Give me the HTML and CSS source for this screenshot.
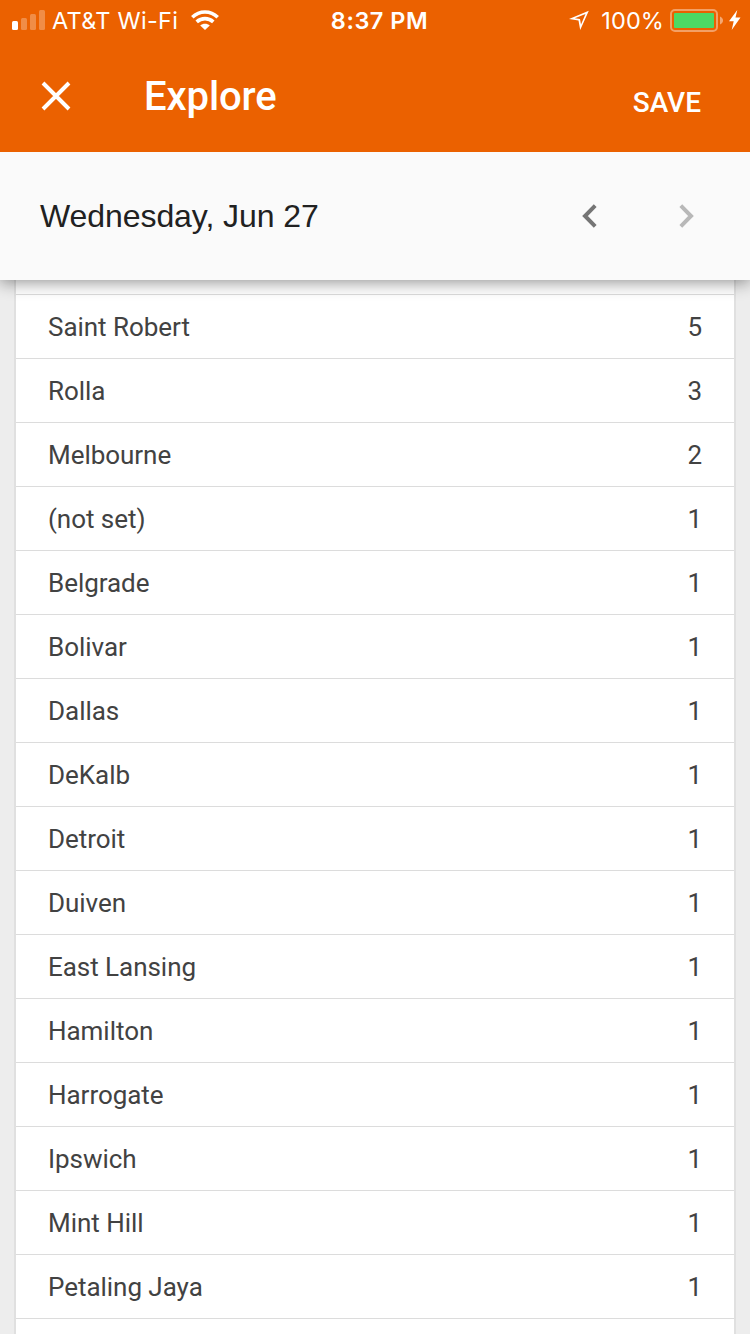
FILE: index.html
```html
<!DOCTYPE html>
<html lang="en">
<head>
<meta charset="utf-8">
<title>Explore</title>
<link rel="stylesheet" href="styles.css">
</head>
<body>
<div class="screen">
  <header class="top">
    <div class="status">
      <div class="status-left">
        <svg class="signal" width="34" height="20" viewBox="0 0 34 20" fill="#fff"><rect x="0" y="11" width="6" height="9" rx="1.5"/><g opacity=".28"><rect x="9" y="8" width="6" height="12" rx="1.5"/><rect x="18" y="4" width="6" height="16" rx="1.5"/><rect x="27" y="0" width="6" height="20" rx="1.5"/></g></svg>
        <span class="carrier">AT&amp;T Wi-Fi</span>
        <svg class="wifi" width="28" height="20" viewBox="0 0 28 20"><g fill="none" stroke="#fff" stroke-width="3.600"><path d="M1.300 7.200C8.500 .2 19.500 .2 26.700 7.200"/><path d="M5.700 11.900C10.500 7.500 17.500 7.500 22.300 11.900"/></g><path d="M9.200 15.600C11.800 13.100 16.200 13.100 18.800 15.600L14 20Z" fill="#fff"/></svg>
      </div>
      <span class="clock">8:37 PM</span>
      <div class="status-right">
        <svg class="location" width="20" height="20" viewBox="0 0 20 20"><path d="M19.800 .8L0 9L9.500 10.500L11.200 20ZM16.500 4L12 14.500L11 9L5.800 8.300Z" fill="#fff" fill-rule="evenodd"/></svg>
        <span class="percent">100%</span>
        <svg class="battery" width="53" height="23" viewBox="0 0 53 23"><rect x="1" y="1" width="46" height="21" rx="4" fill="none" stroke="#fff" stroke-opacity=".4" stroke-width="2"/><rect x="4" y="4" width="40" height="15" rx="1" fill="#4cd964"/><path d="M50 7.500C54 9 54 14 50 15.500Z" fill="#fff" opacity=".45"/></svg>
        <svg class="bolt" width="12" height="20" viewBox="0 0 12 20"><path d="M8.300 0L0 11.200H4.700L2.700 20L11.500 7.600H6.500Z" fill="#fff"/></svg>
      </div>
    </div>
    <div class="appbar">
      <svg class="close" width="32" height="32" viewBox="0 0 32 32"><path d="M3 3L29 29M29 3L3 29" stroke="#fff" stroke-width="3.900"/></svg>
      <h1 class="title">Explore</h1>
      <span class="save">SAVE</span>
    </div>
  </header>
  <div class="datebar">
    <span class="date">Wednesday, Jun 27</span>
    <svg class="prev" width="16" height="24" viewBox="0 0 16 24"><path d="M13.200 1.700L3 12L13.200 22.300" fill="none" stroke="#757575" stroke-width="4"/></svg>
    <svg class="next" width="16" height="24" viewBox="0 0 16 24"><path d="M2.800 1.700L13 12L2.800 22.300" fill="none" stroke="#b8b8b8" stroke-width="4"/></svg>
  </div>
  <main class="content">
    <div class="card">
      <div class="row row-cut"></div>
      <div class="row"><span>Saint Robert</span><span>5</span></div>
      <div class="row"><span>Rolla</span><span>3</span></div>
      <div class="row"><span>Melbourne</span><span>2</span></div>
      <div class="row"><span>(not set)</span><span>1</span></div>
      <div class="row"><span>Belgrade</span><span>1</span></div>
      <div class="row"><span>Bolivar</span><span>1</span></div>
      <div class="row"><span>Dallas</span><span>1</span></div>
      <div class="row"><span>DeKalb</span><span>1</span></div>
      <div class="row"><span>Detroit</span><span>1</span></div>
      <div class="row"><span>Duiven</span><span>1</span></div>
      <div class="row"><span>East Lansing</span><span>1</span></div>
      <div class="row"><span>Hamilton</span><span>1</span></div>
      <div class="row"><span>Harrogate</span><span>1</span></div>
      <div class="row"><span>Ipswich</span><span>1</span></div>
      <div class="row"><span>Mint Hill</span><span>1</span></div>
      <div class="row"><span>Petaling Jaya</span><span>1</span></div>
    </div>
  </main>
</div>
</body>
</html>
```

FILE: styles.css
```css
* { box-sizing: border-box; }
body { margin: 0; font-family: Roboto, sans-serif; }
svg { display: block; flex: none; }
.screen { width: 750px; height: 1334px; overflow: hidden; display: flex; flex-direction: column; background: #ededed; }
.top { position: relative; z-index: 2; height: 152px; flex: none; background: #eb6100; color: #fff; }
.status { height: 40px; display: grid; grid-template-columns: 1fr auto 1fr; grid-template-rows: 40px; align-items: center; padding: 0 9px 0 12px; font: 23.5px/38px Inter, sans-serif; white-space: nowrap; }
.status-left, .status-right { display: flex; align-items: center; height: 40px; }
.status-right { justify-content: flex-end; }
.carrier { margin: 2px 0 0 6px; letter-spacing: .27px; }
.wifi { margin-left: 13px; }
.clock { margin: 2px 0 0 6px; font-weight: 600; letter-spacing: .5px; }
.percent { margin: 2px 6px 0 12px; letter-spacing: .1px; }
.battery { margin-top: 1px; }
.bolt { margin-left: 6px; }
.appbar { height: 112px; display: flex; align-items: center; padding: 0 49px 0 40px; }
.title { margin: 2px 0 0 72px; font-size: 40px; line-height: 48px; font-weight: 500; letter-spacing: -.1px; }
.save { margin: 13px 0 0 auto; font-size: 28px; line-height: 32px; font-weight: 500; }
.datebar { position: relative; z-index: 1; height: 128px; flex: none; display: flex; align-items: center; padding: 0 56px 0 40px; background: #fafafa; box-shadow: 0 2px 16px rgba(0, 0, 0, .45); }
.date { font: 32px/40px "Liberation Sans", sans-serif; letter-spacing: -.07px; color: #212121; }
.prev { margin-left: auto; }
.next { margin-left: 80px; }
.content { padding: 0 14px; }
.card { border: solid #e0e0e0; border-width: 0 2px; background: #fff; }
.row { height: 64px; display: flex; justify-content: space-between; align-items: center; padding: 0 32px; border-bottom: 1px solid #dcdcdc; font-size: 26px; line-height: 32px; letter-spacing: -.04px; color: #424242; }
.row-cut { height: 15px; }
.card::after { content: ""; display: block; height: 16px; }
```
